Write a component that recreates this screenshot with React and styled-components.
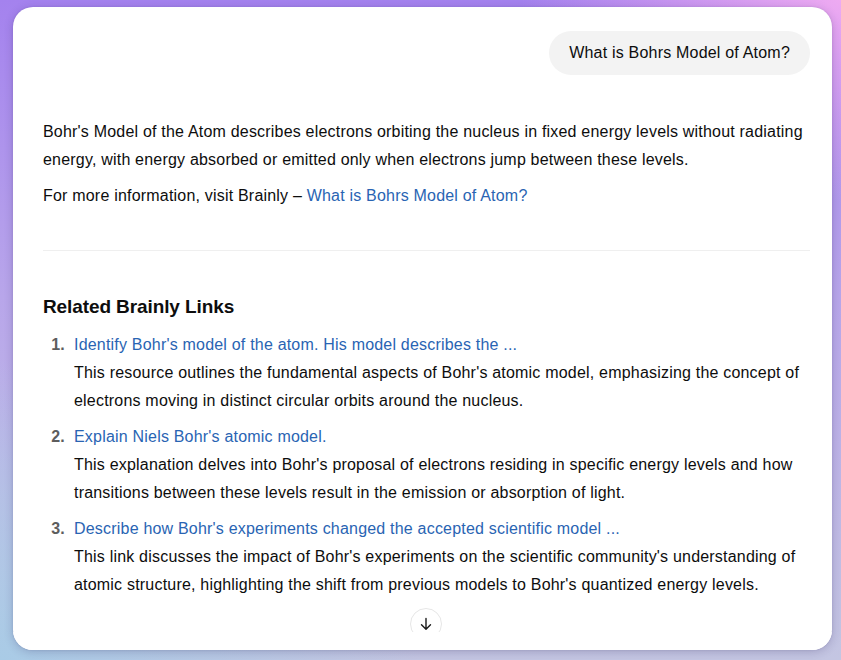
import styled, { createGlobalStyle } from 'styled-components'

const GlobalStyle = createGlobalStyle`
  html, body {
    margin: 0;
    padding: 0;
  }
  body {
    width: 841px;
    height: 660px;
    overflow: hidden;
    font-family: "Liberation Sans", Arial, sans-serif;
    background:
      radial-gradient(ellipse 320px 200px at 100% 0%, #eeaaf2 0%, rgba(238,170,242,0) 100%),
      radial-gradient(ellipse 420px 300px at 0% 100%, #a9cbe6 0%, rgba(169,203,230,0) 100%),
      linear-gradient(180deg, #a482ee 0%, #b8a6ea 45%, #c4c6e2 100%);
  }
`

const links = [
  {
    title: "Identify Bohr's model of the atom. His model describes the ...",
    text: "This resource outlines the fundamental aspects of Bohr's atomic model, emphasizing the concept of electrons moving in distinct circular orbits around the nucleus.",
  },
  {
    title: "Explain Niels Bohr's atomic model.",
    text: "This explanation delves into Bohr's proposal of electrons residing in specific energy levels and how transitions between these levels result in the emission or absorption of light.",
  },
  {
    title: "Describe how Bohr's experiments changed the accepted scientific model ...",
    text: "This link discusses the impact of Bohr's experiments on the scientific community's understanding of atomic structure, highlighting the shift from previous models to Bohr's quantized energy levels.",
  },
]

export default function App() {
  return (
    <>
      <GlobalStyle />
      <Page>
        <Card>
          <Content>
            <UserRow>
              <Bubble>What is Bohrs Model of Atom?</Bubble>
            </UserRow>

            <Answer>
              <Para>
                Bohr's Model of the Atom describes electrons orbiting the nucleus in fixed energy levels without radiating
                energy, with energy absorbed or emitted only when electrons jump between these levels.
              </Para>
              <Para>
                For more information, visit Brainly – <Link href="#">What is Bohrs Model of Atom?</Link>
              </Para>
            </Answer>

            <Divider />

            <Heading>Related Brainly Links</Heading>
            <List>
              {links.map((l, i) => (
                <Item key={i}>
                  <Num>{i + 1}.</Num>
                  <div>
                    <Link href="#">{l.title}</Link>
                    <Desc>{l.text}</Desc>
                  </div>
                </Item>
              ))}
            </List>
          </Content>

          <Fade />
          <ScrollButton aria-label="Scroll down">
            <svg width="16" height="16" viewBox="0 0 16 16" fill="none">
              <path d="M8 2.5v10.5M3.5 8.7 8 13.2l4.5-4.5" stroke="#1a1a1a" strokeWidth="1.4" strokeLinecap="round" strokeLinejoin="round" />
            </svg>
          </ScrollButton>
        </Card>
      </Page>
    </>
  )
}

const Page = styled.div`
  padding: 7px 9px 10px 13px;
  height: 660px;
  box-sizing: border-box;
`

const Card = styled.div`
  position: relative;
  height: 100%;
  background: #fff;
  border-radius: 20px;
  overflow: hidden;
  box-shadow: 0 2px 10px rgba(40, 30, 90, 0.22), 0 0 2px rgba(40, 30, 90, 0.15);
`

const Content = styled.div`
  padding: 24px 22px 0 30px;
  color: #0d0d0d;
  font-size: 16px;
  line-height: 28px;
  letter-spacing: 0.2px;
`

const UserRow = styled.div`
  display: flex;
  justify-content: flex-end;
`

const Bubble = styled.div`
  background: #f3f3f3;
  border-radius: 22px;
  height: 44px;
  padding: 0 20px;
  display: flex;
  align-items: center;
  font-size: 16px;
  color: #0d0d0d;
`

const Answer = styled.div`
  margin-top: 43px;
  display: flex;
  flex-direction: column;
  gap: 8px;
`

const Para = styled.p`
  margin: 0;
`

const Link = styled.a`
  color: #2964b3;
  text-decoration: none;
`

const Divider = styled.hr`
  margin: 40px 0 0;
  border: 0;
  height: 1px;
  background: #efefef;
`

const Heading = styled.h3`
  margin: 42px 0 0;
  font-size: 19px;
  line-height: 28px;
  letter-spacing: -0.1px;
  font-weight: 700;
  color: #0d0d0d;
`

const List = styled.ol`
  list-style: none;
  margin: 10px 0 0;
  padding: 0;
  display: flex;
  flex-direction: column;
  gap: 8px;
`

const Item = styled.li`
  display: grid;
  grid-template-columns: 22px 1fr;
  column-gap: 9px;
`

const Num = styled.span`
  text-align: right;
  font-weight: 700;
  color: #5d5d5d;
`

const Desc = styled.div`
  color: #0d0d0d;
`

const Fade = styled.div`
  position: absolute;
  left: 0;
  right: 0;
  bottom: 0;
  height: 18px;
  background: #fff;
`

const ScrollButton = styled.button`
  position: absolute;
  left: 397px;
  bottom: 10px;
  width: 32px;
  height: 32px;
  border-radius: 50%;
  border: 1px solid #e6e6e6;
  background: #fff;
  padding: 0;
  display: flex;
  align-items: center;
  justify-content: center;
  cursor: pointer;
  clip-path: inset(0 0 8px 0);
`
